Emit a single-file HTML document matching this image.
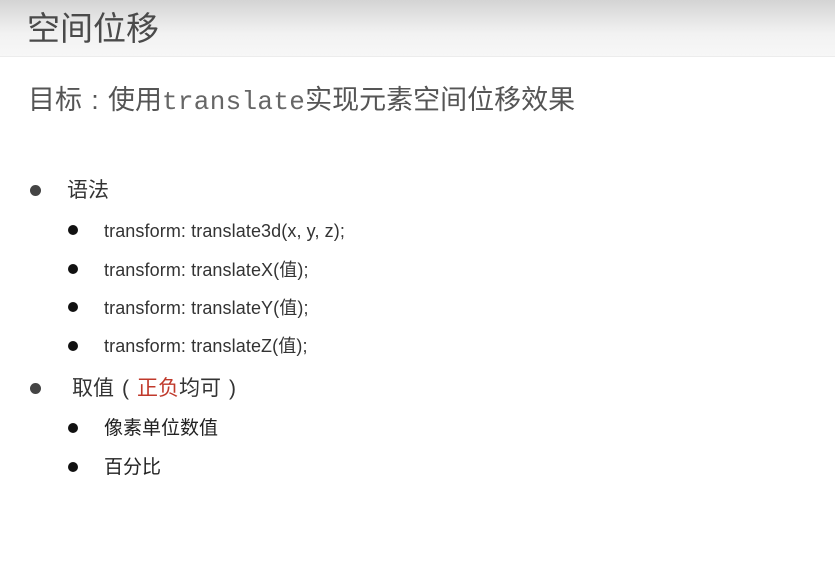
<!DOCTYPE html><html><head><meta charset="utf-8"><style>
body{margin:0;width:835px;height:563px;background:#fff;position:relative;overflow:hidden;font-family:"Liberation Sans","Noto Sans CJK SC",sans-serif}
.hd{position:absolute;left:0;top:0;width:835px;height:56px;background:linear-gradient(#d4d4d4,#f2f2f2 60%,#f7f7f7);border-bottom:1px solid #ececec}
.t{position:absolute;white-space:nowrap}
.d{position:absolute;border-radius:50%}
.s{font-size:18px;color:#333;line-height:24px;letter-spacing:0.1px}
</style></head><body>
<div class="hd"></div>
<div class="t" style="left:27px;top:8px;font-size:33px;color:#4a4a4a;line-height:42px">空间位移</div>
<div class="t" style="left:28px;top:82px;font-size:27px;color:#555;line-height:36px">目标<span style="display:inline-block;width:26px;text-align:center">:</span>使用<span style="font-family:'Liberation Mono',monospace;color:#666;font-size:26px;letter-spacing:0.3px">translate</span>实现元素空间位移效果</div>
<div class="d" style="left:30px;top:185px;width:11px;height:11px;background:#444"></div>
<div class="t" style="left:67px;top:177px;font-size:21px;color:#333;line-height:28px">语法</div>
<div class="d" style="left:68px;top:225px;width:10px;height:10px;background:#111"></div>
<div class="t s" style="left:104px;top:219px">transform: translate3d(x, y, z);</div>
<div class="d" style="left:68px;top:264px;width:10px;height:10px;background:#111"></div>
<div class="t s" style="left:104px;top:258px">transform: translateX(值);</div>
<div class="d" style="left:68px;top:302px;width:10px;height:10px;background:#111"></div>
<div class="t s" style="left:104px;top:296px">transform: translateY(值);</div>
<div class="d" style="left:68px;top:341px;width:10px;height:10px;background:#111"></div>
<div class="t s" style="left:104px;top:334px">transform: translateZ(值);</div>
<div class="d" style="left:30px;top:383px;width:11px;height:11px;background:#444"></div>
<div class="t" style="left:72px;top:375px;font-size:21px;color:#333;line-height:28px">取值<span style="display:inline-block;width:23px;text-align:center">(</span><span style="color:#c0392b">正负</span>均可<span style="display:inline-block;width:23px;text-align:center">)</span></div>
<div class="d" style="left:68px;top:423px;width:10px;height:10px;background:#111"></div>
<div class="t" style="left:104px;top:416px;font-size:19px;color:#222;line-height:26px">像素单位数值</div>
<div class="d" style="left:68px;top:462px;width:10px;height:10px;background:#111"></div>
<div class="t" style="left:104px;top:455px;font-size:19px;color:#222;line-height:26px">百分比</div>
</body></html>
